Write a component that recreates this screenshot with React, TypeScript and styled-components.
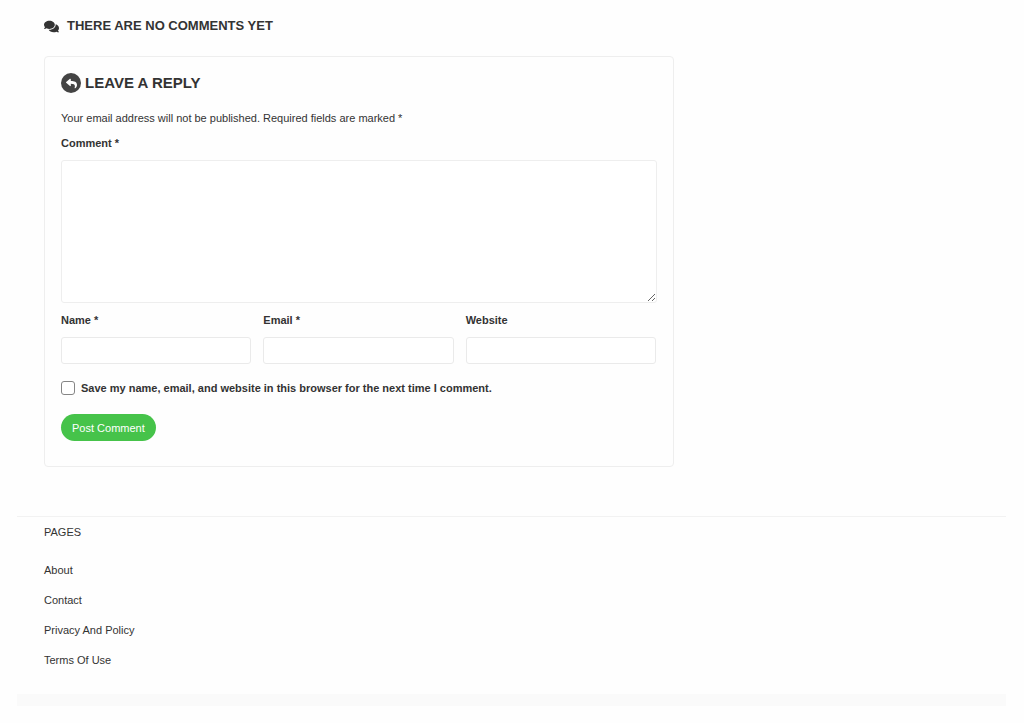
import React from "react";
import styled, { createGlobalStyle } from "styled-components";
import { FaComments, FaReply } from "react-icons/fa";

const GlobalStyle = createGlobalStyle`
  *, *::before, *::after { box-sizing: border-box; }
  body {
    margin: 0;
    background: #fefefe;
    color: #333;
    font-family: "Liberation Sans", Arial, sans-serif;
    font-size: 11px;
    line-height: 16px;
  }
`;

const Page = styled.div`
  margin: 0 18px 0 17px;
`;

const Columns = styled.main`
  display: grid;
  grid-template-columns: 2fr 1fr;
  padding: 16px 17px 49px 27px;
`;

const CommentsTitle = styled.h2`
  display: flex;
  align-items: center;
  gap: 8px;
  margin: 0 0 20px;
  font-size: 13px;
  line-height: 20px;
  text-transform: uppercase;

  svg {
    width: 15px;
    height: 15px;
  }
`;

const ReplyCard = styled.section`
  padding: 16px 16px 25px;
  border: 1px solid #eee;
  border-radius: 4px;
`;

const ReplyTitle = styled.h3`
  display: flex;
  align-items: center;
  gap: 4px;
  margin: 0 0 17px;
  font-size: 15px;
  line-height: 20px;
  text-transform: uppercase;
`;

const ReplyBadge = styled.span`
  display: flex;
  align-items: center;
  justify-content: center;
  width: 20px;
  height: 20px;
  border-radius: 50%;
  background: #444;
  color: #fff;

  svg {
    width: 11px;
    height: 11px;
  }
`;

const Note = styled.p`
  margin: 0 0 9px;
`;

const Field = styled.div`
  display: flex;
  flex-direction: column;
  gap: 9px;
`;

const Label = styled.label`
  font-weight: bold;
`;

const CommentBox = styled.textarea`
  display: block;
  width: 100%;
  height: 143px;
  padding: 8px;
  border: 1px solid #eee;
  border-radius: 3px;
  background: #fff;
  color: inherit;
  font: inherit;
  resize: vertical;
`;

const FieldRow = styled.div`
  display: grid;
  grid-template-columns: repeat(3, 1fr);
  gap: 12px;
  margin: 9px 1px 16px 0;
`;

const TextInput = styled.input`
  width: 100%;
  height: 27px;
  padding: 0 8px;
  border: 1px solid #eaeaea;
  border-radius: 3px;
  background: #fff;
  color: inherit;
  font: inherit;
`;

const Consent = styled.div`
  display: flex;
  align-items: center;
  gap: 6px;
  margin-bottom: 18px;
`;

const Checkbox = styled.input`
  appearance: none;
  width: 14px;
  height: 14px;
  margin: 0;
  border: 1px solid #858585;
  border-radius: 3px;
  background: #fff;

  &:checked {
    background: #46c34a;
  }
`;

const SubmitButton = styled.button`
  display: block;
  height: 27px;
  padding: 0 11px;
  border: 0;
  border-radius: 14px;
  background: #46c34a;
  color: #fff;
  font: inherit;
  cursor: pointer;
`;

const Footer = styled.footer`
  padding: 7px 27px 26px;
  border-top: 1px solid #f2f2f2;
`;

const FooterTitle = styled.h4`
  margin: 0 0 22px;
  font-size: inherit;
  font-weight: normal;
  text-transform: uppercase;
`;

const PageList = styled.ul`
  display: flex;
  flex-direction: column;
  gap: 14px;
  margin: 0;
  padding: 0;
  list-style: none;
`;

const PageLink = styled.a`
  color: inherit;
  text-decoration: none;
`;

const BottomBar = styled.div`
  height: 12px;
  background: #fafafa;
`;

const details = [
  { id: "name", label: "Name *", type: "text" },
  { id: "email", label: "Email *", type: "email" },
  { id: "website", label: "Website", type: "url" },
];

const pages = ["About", "Contact", "Privacy And Policy", "Terms Of Use"];

export default function App() {
  return (
    <>
      <GlobalStyle />
      <Page>
        <Columns>
          <div>
            <CommentsTitle>
              <FaComments aria-hidden />
              There are no comments yet
            </CommentsTitle>
            <ReplyCard>
              <ReplyTitle>
                <ReplyBadge>
                  <FaReply aria-hidden />
                </ReplyBadge>
                Leave a reply
              </ReplyTitle>
              <form onSubmit={(event) => event.preventDefault()}>
                <Note>
                  Your email address will not be published. Required fields are marked *
                </Note>
                <Field>
                  <Label htmlFor="comment">Comment *</Label>
                  <CommentBox id="comment" />
                </Field>
                <FieldRow>
                  {details.map(({ id, label, type }) => (
                    <Field key={id}>
                      <Label htmlFor={id}>{label}</Label>
                      <TextInput id={id} type={type} />
                    </Field>
                  ))}
                </FieldRow>
                <Consent>
                  <Checkbox id="consent" type="checkbox" />
                  <Label htmlFor="consent">
                    Save my name, email, and website in this browser for the next time I comment.
                  </Label>
                </Consent>
                <SubmitButton type="submit">Post Comment</SubmitButton>
              </form>
            </ReplyCard>
          </div>
        </Columns>
        <Footer>
          <FooterTitle>Pages</FooterTitle>
          <PageList>
            {pages.map((page) => (
              <li key={page}>
                <PageLink href="#">{page}</PageLink>
              </li>
            ))}
          </PageList>
        </Footer>
        <BottomBar />
      </Page>
    </>
  );
}
